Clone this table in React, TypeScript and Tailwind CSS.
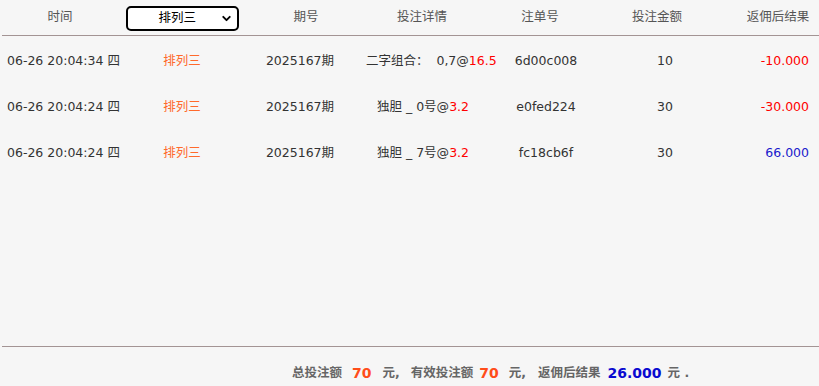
import { ChevronDown } from 'lucide-react';

const rows = [
    { time: '06-26 20:04:34 四', lottery: '排列三', issue: '2025167期', play: '二字组合：  0,7@', odds: '16.5', order: '6d00c008', amount: '10', result: '-10.000', win: false },
    { time: '06-26 20:04:24 四', lottery: '排列三', issue: '2025167期', play: '独胆 _ 0号@', odds: '3.2', order: 'e0fed224', amount: '30', result: '-30.000', win: false },
    { time: '06-26 20:04:24 四', lottery: '排列三', issue: '2025167期', play: '独胆 _ 7号@', odds: '3.2', order: 'fc18cb6f', amount: '30', result: '66.000', win: true },
];

export default function App() {
    return (
        <div
            className="w-[819px] h-[386px] bg-[#f6f6f6] text-[12.5px] text-[#333] flex flex-col"
            style={{ fontFamily: '"DejaVu Sans", "Noto Sans CJK SC", sans-serif' }}
        >
            <div className="h-[36px] flex items-center border-b border-[#a39494] ml-[2px] text-[#555]">
                <div className="w-[116px] text-center">时间</div>
                <div className="w-[128px] flex justify-center">
                    <div className="w-[113px] h-[25px] mt-[2px] bg-white border-2 border-black rounded-[5px] flex items-center justify-between pl-[31px] pr-[4px] text-black">
                        <span>排列三</span>
                        <ChevronDown size={13} strokeWidth={3.5} />
                    </div>
                </div>
                <div className="w-[120px] text-center">期号</div>
                <div className="w-[130px] text-center pr-[18px]">投注详情</div>
                <div className="w-[88px] text-center">注单号</div>
                <div className="w-[162px] text-center pr-[16px]">投注金额</div>
                <div className="w-[70px] text-center pr-[6px] whitespace-nowrap">返佣后结果</div>
            </div>
            <div className="flex-1 border-b border-[#a39494] ml-[2px] pt-[2px]">
                {rows.map((r, i) => (
                    <div key={i} className="h-[46px] flex items-center">
                        <div className="w-[116px] pl-[5px] whitespace-nowrap">{r.time}</div>
                        <div className="w-[128px] text-center text-[#ff6a2b]">{r.lottery}</div>
                        <div className="w-[120px] text-center pr-[12px]">{r.issue}</div>
                        <div className="w-[130px] text-center whitespace-pre pr-[16px]">
                            {r.play}
                            <span className="text-[#ff0000]">{r.odds}</span>
                        </div>
                        <div className="w-[88px] text-center pl-[12px]">{r.order}</div>
                        <div className="w-[162px] text-center">{r.amount}</div>
                        <div className={`flex-1 text-right pr-[10px] ${r.win ? 'text-[#1a1acc]' : 'text-[#ff0000]'}`}>
                            {r.result}
                        </div>
                    </div>
                ))}
            </div>
            <div className="h-[39px] flex items-center pt-[14px] pl-[292px] font-bold text-[#666] whitespace-pre">
                <span>总投注额</span>
                <span className="ml-[10px] mr-[11px] text-[14px] text-[#ff4d1a]">70</span>
                <span>元,</span>
                <span className="ml-[11px]">有效投注额</span>
                <span className="ml-[6px] mr-[10px] text-[14px] text-[#ff4d1a]">70</span>
                <span>元,</span>
                <span className="ml-[12px]">返佣后结果</span>
                <span className="ml-[7px] mr-[6px] text-[14px] text-[#0a0ad0]">26.000</span>
                <span>元 .</span>
            </div>
        </div>
    );
}
